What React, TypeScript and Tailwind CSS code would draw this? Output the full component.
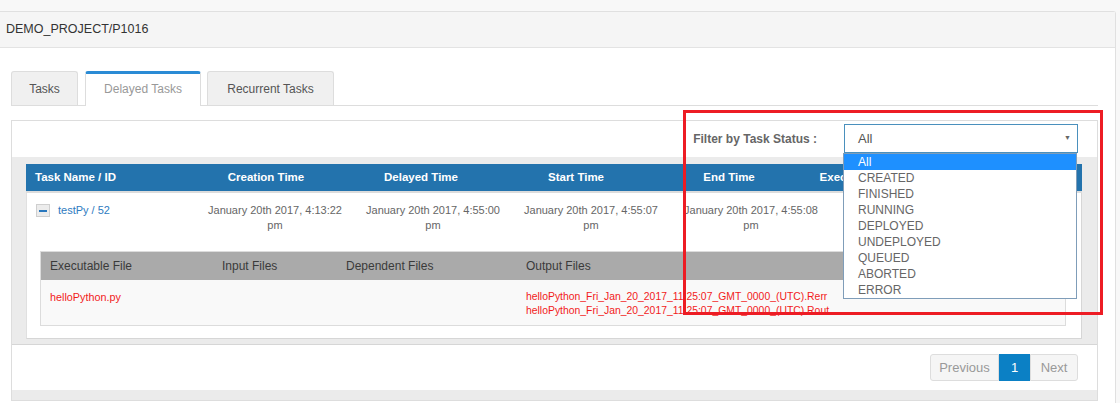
import React from "react";

const font = { fontFamily: '"Liberation Sans", Arial, sans-serif' };

const statuses = ["All", "CREATED", "FINISHED", "RUNNING", "DEPLOYED", "UNDEPLOYED", "QUEUED", "ABORTED", "ERROR"];

function DateCell({ w, time }: { w: string; time: string }) {
  return (
    <div className={`${w} shrink-0 text-center text-[11px] leading-[15px] text-[#666]`}>
      <div className="whitespace-nowrap">January 20th 2017, {time}</div>
      <div>pm</div>
    </div>
  );
}

export default function App() {
  return (
    <div className="relative w-[1120px] h-[403px] overflow-hidden bg-[#f8f8f8] pt-[11px]" style={font}>
      <div className="w-[1116px] h-[392px] bg-white border-t border-r border-[#e0e0e0] rounded-tr-[3px]">
        {/* heading */}
        <div className="h-[36px] bg-[#f5f5f5] border-b border-[#e3e3e3] pl-[6px] flex items-center text-[12.5px] text-[#333]">
          DEMO_PROJECT/P1016
        </div>
        <div className="pl-[11px] pr-[17px] pt-[23px]">
          {/* tabs */}
          <div className="flex items-end h-[35px] border-b border-[#ddd]">
            <div className="w-[67px] h-[34px] mr-[7px] bg-[#f0f0f0] border border-b-0 border-[#ddd] rounded-t-[3px] flex items-center justify-center text-[12px] text-[#555]">
              Tasks
            </div>
            <div className="w-[116px] h-[35px] -mb-px mr-[6px] bg-white border border-b-0 border-t-[3px] border-[#ddd] border-t-[#2a8bd5] rounded-t-[3px] flex items-center justify-center text-[12px] text-[#999] pb-[2px]">
              Delayed Tasks
            </div>
            <div className="w-[127px] h-[34px] bg-[#f0f0f0] border border-b-0 border-[#ddd] rounded-t-[3px] flex items-center justify-center text-[12px] text-[#555]">
              Recurrent Tasks
            </div>
          </div>
          {/* box */}
          <div className="mt-[14px] w-[1087px] h-[281px] border border-[#ddd] bg-[#ebebeb]">
            {/* filter bar */}
            <div className="h-[36px] bg-white flex items-start justify-end pr-[19px] pt-[3px]">
              <div className="h-[29px] flex items-center text-[12px] font-bold text-[#666] mr-[27px]">Filter by Task Status :</div>
              <div className="w-[234px] h-[29px] border border-[#4a90bd] bg-white flex items-center justify-between pl-[13px] pr-[6px] text-[13px] text-[#555]">
                <span>All</span>
                <span className="text-[7px] text-[#666]">▼</span>
              </div>
            </div>
            {/* table area */}
            <div className="pl-[14px] pr-[14px] pt-[7px] h-[187px]">
              <div className="w-[1056px]">
                <div className="h-[27px] bg-[#2373ad] flex items-center text-[11.5px] font-bold text-white">
                  <div className="w-[162px] shrink-0 pl-[9px]">Task Name / ID</div>
                  <div className="w-[156px] shrink-0 text-center">Creation Time</div>
                  <div className="w-[154px] shrink-0 text-center">Delayed Time</div>
                  <div className="w-[156px] shrink-0 text-center">Start Time</div>
                  <div className="w-[150px] shrink-0 text-center">End Time</div>
                  <div className="w-[116px] shrink-0 text-center whitespace-nowrap">Execution Time</div>
                </div>
                <div className="h-[2px] bg-[#dcdcdc]" />
                <div className="bg-white border-b border-r border-[#d6d6d6] border-l border-l-[#e0e0e0] w-[1056px]">
                  <div className="h-[58px] flex items-start pt-[10px]">
                    <div className="w-[169px] shrink-0 pl-[9px] flex items-start">
                      <div className="mt-[1px] w-[14px] h-[13px] bg-[#ececec] border border-[#cfcfcf] flex items-center justify-center">
                        <div className="w-[8px] h-[2px] bg-[#2a78be]" />
                      </div>
                      <span className="ml-[8px] text-[11px] leading-[15px] text-[#2e7bbf]">testPy / 52</span>
                    </div>
                    <DateCell w="w-[158px]" time="4:13:22" />
                    <DateCell w="w-[158px]" time="4:55:00" />
                    <DateCell w="w-[158px]" time="4:55:07" />
                    <DateCell w="w-[162px]" time="4:55:08" />
                  </div>
                  <div className="ml-[13px] mr-[15px] mb-[12px] h-[75px] border border-[#dcdcdc] bg-[#f9f9f9]">
                    <div className="h-[28px] bg-[#aaaaaa] flex items-center pl-[9px] text-[12px] text-[#3a3a3a]">
                      <div className="w-[172px] shrink-0">Executable File</div>
                      <div className="w-[124px] shrink-0">Input Files</div>
                      <div className="w-[180px] shrink-0">Dependent Files</div>
                      <div>Output Files</div>
                    </div>
                    <div className="flex pl-[9px] pt-[10px] text-[#f21b1b]">
                      <div className="w-[476px] shrink-0 text-[10.8px] leading-[14px]">helloPython.py</div>
                      <div className="text-[10.4px] leading-[14px] whitespace-nowrap">
                        <div>helloPython_Fri_Jan_20_2017_11:25:07_GMT_0000_(UTC).Rerr</div>
                        <div>helloPython_Fri_Jan_20_2017_11:25:07_GMT_0000_(UTC).Rout</div>
                      </div>
                    </div>
                  </div>
                </div>
              </div>
            </div>
            {/* footer */}
            <div className="h-[46px] bg-white border-t border-[#d6d6d6] flex justify-end items-start pt-[9px] pr-[19px]">
              <div className="flex h-[27px] text-[13px]">
                <div className="w-[69px] h-[27px] border border-[#ddd] rounded-l-[3px] bg-[#f5f5f5] text-[#999] flex items-center justify-center">Previous</div>
                <div className="w-[31px] h-[27px] bg-[#0b80c5] text-white flex items-center justify-center">1</div>
                <div className="w-[48px] h-[27px] border border-[#ddd] rounded-r-[3px] bg-[#f5f5f5] text-[#999] flex items-center justify-center">Next</div>
              </div>
            </div>
          </div>
        </div>
      </div>

      {/* dropdown list overlay */}
      <div className="absolute left-[843px] top-[153px] w-[234px] h-[146px] border border-[#7f9db9] bg-white">
        {statuses.map((s, i) => (
          <div
            key={s}
            className={`h-[16px] pl-[14px] flex items-center text-[12px] ${i === 0 ? "bg-[#1e90ff] text-white" : "text-[#666]"}`}
          >
            {s}
          </div>
        ))}
      </div>

      {/* red highlight box */}
      <div className="absolute left-[683px] top-[110px] w-[420px] h-[205px] border-[3px] border-[#ed1c24]" />
    </div>
  );
}
